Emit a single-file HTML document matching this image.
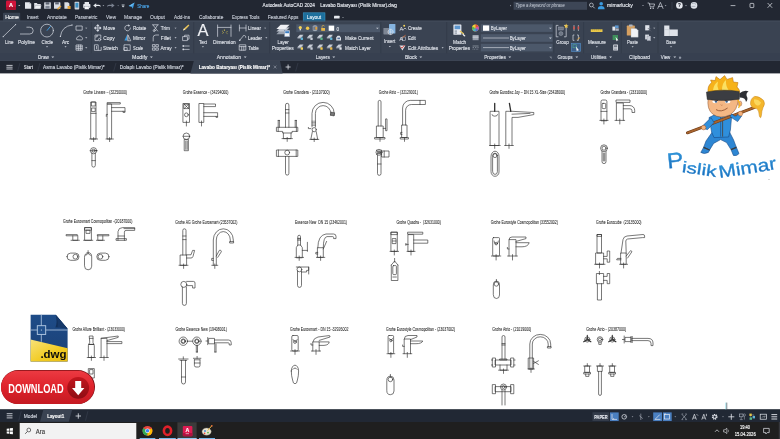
<!DOCTYPE html>
<html lang="tr">
<head>
<meta charset="utf-8">
<title>Autodesk AutoCAD 2024 - Lavabo Bataryası (Pislik Mimar).dwg</title>
<style>
html,body{margin:0;padding:0;background:#fff;overflow:hidden}
body{width:780px;height:439px;position:relative;font-family:"Liberation Sans",sans-serif}
svg{position:absolute;left:0;top:0;display:block;will-change:transform;transform:translateZ(0)}
text{font-family:"Liberation Sans",sans-serif;white-space:pre}
.ln{fill:none;stroke:#303030;stroke-width:.65;stroke-linecap:round;stroke-linejoin:round}
.lt{fill:#2e2e2e;font-size:3.9px}
.ic{fill:none;stroke:#d5dae3;stroke-width:.7;stroke-linecap:round;stroke-linejoin:round}
</style>
</head>
<body>
<svg width="780" height="439" viewBox="0 0 780 439">
<defs>
<linearGradient id="gBtn" x1="0" y1="0" x2="0" y2="1"><stop offset="0" stop-color="#ec3a42"/><stop offset=".5" stop-color="#de222b"/><stop offset="1" stop-color="#c41a22"/></linearGradient>
<linearGradient id="gCirc" x1="0" y1="0" x2="0" y2="1"><stop offset="0" stop-color="#c3161e"/><stop offset="1" stop-color="#8e0d13"/></linearGradient>
<linearGradient id="gBlue" x1="0" y1="0" x2="0" y2="1"><stop offset="0" stop-color="#1e4c88"/><stop offset="1" stop-color="#1b4076"/></linearGradient>
<linearGradient id="gYel" x1="0" y1="0" x2="1" y2="1"><stop offset="0" stop-color="#f7e27a"/><stop offset=".6" stop-color="#f2cb22"/><stop offset="1" stop-color="#e9bd14"/></linearGradient>
<linearGradient id="gTxt" x1="0" y1="0" x2="0" y2="1"><stop offset="0" stop-color="#35a0e0"/><stop offset="1" stop-color="#1560b0"/></linearGradient>
</defs>

<rect x="0" y="0" width="780" height="439" fill="#ffffff"/>
<rect x="0" y="0" width="780" height="21" fill="#222732"/>
<rect x="0" y="20.6" width="780" height="40.2" fill="#3a4352"/>
<rect x="0" y="60.6" width="780" height="12.8" fill="#222732"/>
<rect x="0" y="409.2" width="780" height="13" fill="#212834"/>
<rect x="0" y="422" width="780" height="17" fill="#1f1f1f"/>
<g id="titlebar">
<rect x="6" y="0.6" width="10" height="9.2" rx="1.2" fill="#d2143a"/>
<rect x="6" y="6.8" width="10" height="3" rx="1" fill="#a90f2d"/>
<text x="9.0" y="6.9" font-size="5.8" fill="#ffffff" font-weight="bold" font-style="normal" textLength="4.0" lengthAdjust="spacingAndGlyphs"  stroke="#ffffff" stroke-width=".14">A</text>
<path d="M18.1 5.0h2.2l-1.1 1.1z" fill="#e0e3e9"/>
<path d="M25 2.2h4.6l1.6 1.6v5H25z" fill="#e4e7ec"/><path d="M29.6 2.2v1.6h1.6" fill="none" stroke="#8a909c" stroke-width=".4"/>
<path d="M34.2 3h2.6l.8.9h3.2v4.9h-6.6z" fill="#e4e7ec"/><path d="M35.4 5.4h6l-1.2 3.4h-6z" fill="#f0f2f5" stroke="#6d7380" stroke-width=".3"/>
<rect x="44.2" y="2.2" width="6.6" height="6.6" rx=".6" fill="#d9dde4"/><rect x="45.6" y="2.2" width="3.8" height="2.4" fill="#5b6270"/><rect x="45.4" y="5.8" width="4.2" height="3" fill="#7b8290"/>
<rect x="54" y="2.2" width="6.4" height="6.6" rx=".6" fill="#d9dde4"/><rect x="55.2" y="2.2" width="3.6" height="2.2" fill="#5b6270"/><path d="M57 8.8l3.6-3.4.9.9-3.4 3.4z" fill="#e2a33a"/>
<path d="M64.4 2.2h3.6l1.4 1.4v5.2h-5z" fill="#d9dde4"/><rect x="67.6" y="6" width="3" height="3" fill="#e2a33a"/>
<rect x="74.6" y="1.8" width="4.6" height="7.6" rx=".7" fill="#cfd4dc"/><rect x="75.4" y="2.8" width="3" height="4.8" fill="#3a8fc4"/>
<rect x="83.2" y="4" width="7.2" height="4" rx=".8" fill="#e4e7ec"/><rect x="84.6" y="2" width="4.4" height="2.2" fill="#e4e7ec"/><rect x="84.6" y="6.4" width="4.4" height="2.8" fill="#f5f6f8" stroke="#6d7380" stroke-width=".3"/>
<path d="M93.2 5.6l3-2.4v1.6h2.4a1.9 1.9 0 0 1 1.8 2.4c-.3-1-1-1.2-1.8-1.2h-2.4v1.8z" fill="#e4e7ec"/>
<path d="M102.5 5.3h1.8l-0.9 0.9z" fill="#b8bec9"/>
<path d="M114.6 5.6l-3-2.4v1.6h-2.4a1.9 1.9 0 0 0-1.8 2.4c.3-1 1-1.2 1.8-1.2h2.4v1.8z" fill="#7b8290"/>
<path d="M117.3 5.3h1.8l-0.9 0.9z" fill="#7b8290"/>
<path d="M121.6 4.6h3M121.9 5.8h2.4l-1.2 1.4z" stroke="#cfd4dc" stroke-width=".5" fill="#cfd4dc"/>
<path d="M128.6 6l6-3.4-1.8 6.2-1.4-2.2z" fill="#3b9be0"/><path d="M128.6 6l2.8.6 3.2-4z" fill="#6cbaf0"/>
<text x="137.2" y="7.5" font-size="5.4" fill="#4aa3e6" font-weight="normal" font-style="normal" textLength="12.2" lengthAdjust="spacingAndGlyphs"  stroke="#4aa3e6" stroke-width=".14">Share</text>
<text x="262.6" y="7.4" font-size="5.2" fill="#e6e9ef" font-weight="normal" font-style="normal" textLength="52.4" lengthAdjust="spacingAndGlyphs"  stroke="#e6e9ef" stroke-width=".14">Autodesk AutoCAD 2024</text>
<text x="320.2" y="7.4" font-size="5.2" fill="#e6e9ef" font-weight="normal" font-style="normal" textLength="76.8" lengthAdjust="spacingAndGlyphs"  stroke="#e6e9ef" stroke-width=".14">Lavabo Bataryası (Pislik Mimar).dwg</text>
<path transform="rotate(-90 510.8 5.6)" d="M509.9 5.1h1.8l-0.9 0.9z" fill="#b8bec9"/>
<rect x="513.6" y="1.8" width="73.4" height="8" fill="#3d4656"/>
<text x="515.6" y="7.4" font-size="4.6" fill="#aab1bd" font-weight="normal" font-style="italic" textLength="49.0" lengthAdjust="spacingAndGlyphs"  stroke="#aab1bd" stroke-width=".14">Type a keyword or phrase</text>
<circle cx="591.4" cy="5" r="1.9" fill="none" stroke="#cfd4dc" stroke-width=".7"/><path d="M592.8 6.4l1.9 1.9" stroke="#cfd4dc" stroke-width=".8"/>
<circle cx="601.2" cy="3.8" r="1.8" fill="#3b9be0"/><path d="M597.8 9.2a3.4 3.2 0 0 1 6.8 0z" fill="#3b9be0"/>
<text x="607.0" y="7.4" font-size="5.0" fill="#e6e9ef" font-weight="normal" font-style="normal" textLength="25.8" lengthAdjust="spacingAndGlyphs"  stroke="#e6e9ef" stroke-width=".14">mimarlucky</text>
<path d="M642.1 5.1h1.8l-0.9 0.9z" fill="#b8bec9"/>
<path d="M648 3h1.2l1 3.8h3.6l.8-2.8h-5" class="ic" stroke-width=".8"/><circle cx="650.6" cy="8.2" r=".7" fill="#d5dae3"/><circle cx="653.2" cy="8.2" r=".7" fill="#d5dae3"/>
<path d="M657.8 8.4l2.6-6 2.6 6M658.8 6.4h3.2" class="ic" stroke-width="1"/>
<path d="M664.7 5.3h1.8l-0.9 0.9z" fill="#b8bec9"/>
<path d="M672 2v7.4" stroke="#4b5361" stroke-width=".5"/>
<circle cx="679.4" cy="5.4" r="3.3" fill="#e6e9ef"/>
<text x="678.0" y="7.4" font-size="5.2" fill="#222732" font-weight="bold" font-style="normal" textLength="2.8" lengthAdjust="spacingAndGlyphs"  stroke="#222732" stroke-width=".14">?</text>
<path d="M685.1 5.3h1.8l-0.9 0.9z" fill="#b8bec9"/>
<circle cx="694" cy="5.4" r="3.3" fill="#dfe3ea"/><path d="M692 3.6a3 3 0 0 1 4 .8M691.4 6.4h4" stroke="#7b8290" stroke-width=".5" fill="none"/>
<path d="M730.6 5.6h4.8" stroke="#e6e9ef" stroke-width=".7"/>
<rect x="750" y="3.4" width="3.8" height="4.2" rx=".6" fill="none" stroke="#e6e9ef" stroke-width=".7"/>
<path d="M767.6 3l4.6 4.8M772.2 3l-4.6 4.8" stroke="#e6e9ef" stroke-width=".7"/>
</g>
<g id="ribbontabs">
<path d="M3 21v-7.4q0-.8.8-.8h15.6q.8 0 .8.8V21z" fill="#3a4352"/>
<text x="5.2" y="19.4" font-size="6.0" fill="#ffffff" font-weight="normal" font-style="normal" textLength="13.8" lengthAdjust="spacingAndGlyphs"  stroke="#ffffff" stroke-width=".14">Home</text>
<text x="27.0" y="19.4" font-size="6.0" fill="#c9ced8" font-weight="normal" font-style="normal" textLength="11.5" lengthAdjust="spacingAndGlyphs"  stroke="#c9ced8" stroke-width=".14">Insert</text>
<text x="47.0" y="19.4" font-size="6.0" fill="#c9ced8" font-weight="normal" font-style="normal" textLength="19.7" lengthAdjust="spacingAndGlyphs"  stroke="#c9ced8" stroke-width=".14">Annotate</text>
<text x="75.0" y="19.4" font-size="6.0" fill="#c9ced8" font-weight="normal" font-style="normal" textLength="22.4" lengthAdjust="spacingAndGlyphs"  stroke="#c9ced8" stroke-width=".14">Parametric</text>
<text x="106.0" y="19.4" font-size="6.0" fill="#c9ced8" font-weight="normal" font-style="normal" textLength="10.0" lengthAdjust="spacingAndGlyphs"  stroke="#c9ced8" stroke-width=".14">View</text>
<text x="124.0" y="19.4" font-size="6.0" fill="#c9ced8" font-weight="normal" font-style="normal" textLength="18.0" lengthAdjust="spacingAndGlyphs"  stroke="#c9ced8" stroke-width=".14">Manage</text>
<text x="150.0" y="19.4" font-size="6.0" fill="#c9ced8" font-weight="normal" font-style="normal" textLength="15.0" lengthAdjust="spacingAndGlyphs"  stroke="#c9ced8" stroke-width=".14">Output</text>
<text x="174.0" y="19.4" font-size="6.0" fill="#c9ced8" font-weight="normal" font-style="normal" textLength="16.0" lengthAdjust="spacingAndGlyphs"  stroke="#c9ced8" stroke-width=".14">Add-ins</text>
<text x="199.0" y="19.4" font-size="6.0" fill="#c9ced8" font-weight="normal" font-style="normal" textLength="24.3" lengthAdjust="spacingAndGlyphs"  stroke="#c9ced8" stroke-width=".14">Collaborate</text>
<text x="232.0" y="19.4" font-size="6.0" fill="#c9ced8" font-weight="normal" font-style="normal" textLength="27.5" lengthAdjust="spacingAndGlyphs"  stroke="#c9ced8" stroke-width=".14">Express Tools</text>
<text x="267.7" y="19.4" font-size="6.0" fill="#c9ced8" font-weight="normal" font-style="normal" textLength="30.8" lengthAdjust="spacingAndGlyphs"  stroke="#c9ced8" stroke-width=".14">Featured Apps</text>
<rect x="303.2" y="12.8" width="21.8" height="8.4" fill="#1d6f9c" stroke="#3f9fd0" stroke-width=".5"/>
<text x="306.8" y="19.4" font-size="6.0" fill="#e9f3fa" font-weight="normal" font-style="normal" textLength="14.4" lengthAdjust="spacingAndGlyphs"  stroke="#e9f3fa" stroke-width=".14">Layout</text>
<rect x="334" y="15.8" width="5.6" height="2.8" rx=".4" fill="#e6e9ef"/>
<path d="M342.1 16.9h1.8l-0.9 0.9z" fill="#d5dae3"/>
</g>
<g id="ribbon">
<rect x="0" y="20.6" width="780" height="1" fill="#434d5b"/>
<path d="M91.3 22v38" stroke="#2f3744" stroke-width=".6"/>
<path d="M193.7 22v38" stroke="#2f3744" stroke-width=".6"/>
<path d="M269.7 22v38" stroke="#2f3744" stroke-width=".6"/>
<path d="M380.8 22v38" stroke="#2f3744" stroke-width=".6"/>
<path d="M446.7 22v38" stroke="#2f3744" stroke-width=".6"/>
<path d="M553.8 22v38" stroke="#2f3744" stroke-width=".6"/>
<path d="M583.6 22v38" stroke="#2f3744" stroke-width=".6"/>
<path d="M621.3 22v38" stroke="#2f3744" stroke-width=".6"/>
<path d="M658 22v38" stroke="#2f3744" stroke-width=".6"/>
<rect x="0" y="53.2" width="780" height="7.4" fill="#374050"/>
<path d="M3.2 36.6L15.6 24.6" class="ic" stroke-width=".8"/><circle cx="3.2" cy="36.6" r=".6" fill="#d5dae3"/><circle cx="15.6" cy="24.6" r=".6" fill="#d5dae3"/>
<text x="5.0" y="44.2" font-size="6.0" fill="#dfe3ea" font-weight="normal" font-style="normal" textLength="8.4" lengthAdjust="spacingAndGlyphs"  stroke="#dfe3ea" stroke-width=".14">Line</text>
<path d="M20.4 34h9.4a3.4 3.4 0 0 0 0-6.8h-3" class="ic" stroke-width=".8"/>
<text x="18.0" y="44.2" font-size="6.0" fill="#dfe3ea" font-weight="normal" font-style="normal" textLength="17.0" lengthAdjust="spacingAndGlyphs"  stroke="#dfe3ea" stroke-width=".14">Polyline</text>
<circle cx="47" cy="30.6" r="6.4" class="ic" stroke-width=".8"/><path d="M47 30.6l3.6-4.4" stroke="#3b9be0" stroke-width="1" fill="none"/>
<text x="41.4" y="44.2" font-size="6.0" fill="#dfe3ea" font-weight="normal" font-style="normal" textLength="11.6" lengthAdjust="spacingAndGlyphs"  stroke="#dfe3ea" stroke-width=".14">Circle</text>
<path d="M46.0 46.3h2.1l-1.1 1.1z" fill="#c9ced8"/>
<path d="M60.4 36.4q1.2-10.2 11.6-11.4" class="ic" stroke-width=".8"/><circle cx="60.4" cy="36.4" r=".6" fill="#d5dae3"/><circle cx="72" cy="25" r=".6" fill="#d5dae3"/>
<text x="62.0" y="44.2" font-size="6.0" fill="#dfe3ea" font-weight="normal" font-style="normal" textLength="7.2" lengthAdjust="spacingAndGlyphs"  stroke="#dfe3ea" stroke-width=".14">Arc</text>
<path d="M64.5 46.3h2.1l-1.1 1.1z" fill="#c9ced8"/>
<rect x="76.4" y="26" width="5.8" height="4.2" class="ic"/>
<path d="M85.2 27.7h2.1l-1.1 1.1z" fill="#c9ced8"/>
<path d="M76.6 39.4a1.6 1.6 0 0 1 1.2-2.4 2 2 0 0 1 3.6 0 1.6 1.6 0 0 1 .6 2.8z" class="ic"/>
<path d="M85.2 37.3h2.1l-1.1 1.1z" fill="#c9ced8"/>
<rect x="76.4" y="45" width="5.8" height="5.2" class="ic"/><path d="M76.4 46.8h5.8M76.4 48.6h5.8M78.4 45v5.2M80.4 45v5.2" class="ic" stroke-width=".4"/>
<path d="M85.2 47.3h2.1l-1.1 1.1z" fill="#c9ced8"/>
<text x="38.0" y="59.2" font-size="6.0" fill="#dfe3ea" font-weight="normal" font-style="normal" textLength="10.8" lengthAdjust="spacingAndGlyphs"  stroke="#dfe3ea" stroke-width=".14">Draw</text>
<path d="M51.4 56.5h2.8l-1.4 1.4z" fill="#c9ced8"/>
<path d="M97.8 24.8v6.4M94.6 28h6.4M97.8 24.6l-1.2 1.4h2.4zM97.8 31.4l-1.2-1.4h2.4zM94.4 28l1.4-1.2v2.4zM101.2 28l-1.4-1.2v2.4z" stroke="#d5dae3" stroke-width=".7" fill="#d5dae3"/>
<text x="103.3" y="30.2" font-size="6.0" fill="#dfe3ea" font-weight="normal" font-style="normal" textLength="12.0" lengthAdjust="spacingAndGlyphs"  stroke="#dfe3ea" stroke-width=".14">Move</text>
<circle cx="96" cy="36" r="1.2" class="ic"/><circle cx="99.6" cy="39.6" r="1.2" class="ic"/><path d="M97.4 35h3.4v3M95 37.6v3h3" class="ic" stroke-width=".5"/>
<text x="103.3" y="40.0" font-size="6.0" fill="#dfe3ea" font-weight="normal" font-style="normal" textLength="11.4" lengthAdjust="spacingAndGlyphs"  stroke="#dfe3ea" stroke-width=".14">Copy</text>
<rect x="94.8" y="44.8" width="3.4" height="5.6" class="ic"/><path d="M98.2 50.4h3v-3" class="ic"/><path d="M96.5 46.4v2.4" class="ic"/>
<text x="103.0" y="49.8" font-size="6.0" fill="#dfe3ea" font-weight="normal" font-style="normal" textLength="15.0" lengthAdjust="spacingAndGlyphs"  stroke="#dfe3ea" stroke-width=".14">Stretch</text>
<path d="M129 25.6a2.8 2.8 0 1 0 1.4 2.4" class="ic" stroke-width=".8"/><path d="M128.2 24.2l1.8 1.4-1.6 1.2z" fill="#d5dae3"/>
<text x="133.0" y="30.2" font-size="6.0" fill="#dfe3ea" font-weight="normal" font-style="normal" textLength="13.3" lengthAdjust="spacingAndGlyphs"  stroke="#dfe3ea" stroke-width=".14">Rotate</text>
<path d="M124.4 40.4l2.6-5.4v5.4z" fill="#3b9be0"/><path d="M130.6 40.4l-2.6-5.4v5.4z" class="ic" stroke-width=".5"/><path d="M127.5 34v7.2" stroke="#d5dae3" stroke-width=".4"/>
<text x="133.0" y="40.0" font-size="6.0" fill="#dfe3ea" font-weight="normal" font-style="normal" textLength="12.3" lengthAdjust="spacingAndGlyphs"  stroke="#dfe3ea" stroke-width=".14">Mirror</text>
<rect x="124.4" y="44.8" width="5.8" height="5.6" class="ic"/><rect x="124.4" y="47.6" width="2.8" height="2.8" class="ic"/>
<text x="133.0" y="49.8" font-size="6.0" fill="#dfe3ea" font-weight="normal" font-style="normal" textLength="10.0" lengthAdjust="spacingAndGlyphs"  stroke="#dfe3ea" stroke-width=".14">Scale</text>
<path d="M153 25l4.6 6M157.6 25l-3 4.6" class="ic" stroke-width=".9"/><circle cx="154.2" cy="30.6" r="1" class="ic"/><path d="M152.6 24.8h5.6" class="ic" stroke-width=".9"/>
<text x="160.8" y="30.2" font-size="6.0" fill="#dfe3ea" font-weight="normal" font-style="normal" textLength="9.2" lengthAdjust="spacingAndGlyphs"  stroke="#dfe3ea" stroke-width=".14">Trim</text>
<path d="M174.5 27.7h2.1l-1.1 1.1z" fill="#c9ced8"/>
<path d="M153.2 41v-3.4a2.6 2.6 0 0 1 2.6-2.6h2.8" class="ic" stroke-width=".8"/>
<text x="160.8" y="40.0" font-size="6.0" fill="#dfe3ea" font-weight="normal" font-style="normal" textLength="10.0" lengthAdjust="spacingAndGlyphs"  stroke="#dfe3ea" stroke-width=".14">Fillet</text>
<path d="M174.5 37.3h2.1l-1.1 1.1z" fill="#c9ced8"/>
<rect x="152.8" y="44.6" width="2.2" height="2.2" class="ic" stroke-width=".5"/><rect x="156.2" y="44.6" width="2.2" height="2.2" class="ic" stroke-width=".5"/><rect x="152.8" y="48" width="2.2" height="2.2" class="ic" stroke-width=".5"/><rect x="156.2" y="48" width="2.2" height="2.2" class="ic" stroke-width=".5"/>
<text x="160.4" y="49.8" font-size="6.0" fill="#dfe3ea" font-weight="normal" font-style="normal" textLength="11.2" lengthAdjust="spacingAndGlyphs"  stroke="#dfe3ea" stroke-width=".14">Array</text>
<path d="M174.5 47.3h2.1l-1.1 1.1z" fill="#c9ced8"/>
<path d="M183 30.6l1-2 4.4-4 1 1-4.2 4.2z" fill="#e8c35a"/><path d="M183 30.6l1-2 1 1z" fill="#f5f6f8"/>
<rect x="183" y="36.6" width="4.4" height="4" class="ic"/><path d="M184.6 36.6v-1.4h4.4v4h-1.6" class="ic" stroke-width=".5"/>
<path d="M183 46h6.2M183 49.4h6.2" class="ic" stroke-width=".8"/><rect x="182.6" y="45.2" width="1.4" height="1.6" fill="#d5dae3"/><rect x="182.6" y="48.6" width="1.4" height="1.6" fill="#d5dae3"/>
<text x="132.0" y="59.2" font-size="6.0" fill="#dfe3ea" font-weight="normal" font-style="normal" textLength="15.5" lengthAdjust="spacingAndGlyphs"  stroke="#dfe3ea" stroke-width=".14">Modify</text>
<path d="M150.0 56.5h2.8l-1.4 1.4z" fill="#c9ced8"/>
<text x="197.6" y="36.2" font-size="15.6" fill="#eef0f4" font-weight="normal" font-style="normal" textLength="11.0" lengthAdjust="spacingAndGlyphs"  stroke="#eef0f4" stroke-width=".14">A</text>
<text x="199.0" y="44.2" font-size="6.0" fill="#dfe3ea" font-weight="normal" font-style="normal" textLength="8.0" lengthAdjust="spacingAndGlyphs"  stroke="#dfe3ea" stroke-width=".14">Text</text>
<path d="M201.9 46.3h2.1l-1.1 1.1z" fill="#c9ced8"/>
<path d="M217.6 25v11.4M231 25v11.4M217.6 27.4h13.4" class="ic" stroke-width=".7"/>
<path d="M222.4 33.4l1.4-1M224.4 31v-1.6M226.2 32.4l1.2-1.2M222.2 31l.8.6M227.4 33.6l-.8-.4" stroke="#e7d24a" stroke-width=".7" fill="none"/>
<text x="213.0" y="44.2" font-size="6.0" fill="#dfe3ea" font-weight="normal" font-style="normal" textLength="22.8" lengthAdjust="spacingAndGlyphs"  stroke="#dfe3ea" stroke-width=".14">Dimension</text>
<path d="M239.4 25v6M246 25v6M239.4 28h6.6" class="ic" stroke-width=".8"/>
<text x="248.0" y="30.2" font-size="6.0" fill="#dfe3ea" font-weight="normal" font-style="normal" textLength="13.0" lengthAdjust="spacingAndGlyphs"  stroke="#dfe3ea" stroke-width=".14">Linear</text>
<path d="M264.1 27.7h2.1l-1.1 1.1z" fill="#c9ced8"/>
<path d="M239.6 40.4l3-3.6a1.6 1.6 0 0 1 3.2.6" class="ic" stroke-width=".7"/><circle cx="239.8" cy="40.2" r=".8" fill="#d5dae3"/>
<text x="248.0" y="40.0" font-size="6.0" fill="#dfe3ea" font-weight="normal" font-style="normal" textLength="14.0" lengthAdjust="spacingAndGlyphs"  stroke="#dfe3ea" stroke-width=".14">Leader</text>
<path d="M265.3 37.3h2.1l-1.1 1.1z" fill="#c9ced8"/>
<rect x="239.6" y="44.8" width="6.2" height="5.4" class="ic"/><path d="M239.6 46.6h6.2M241.7 46.6v3.6M243.8 46.6v3.6" class="ic" stroke-width=".5"/>
<text x="248.3" y="49.8" font-size="6.0" fill="#dfe3ea" font-weight="normal" font-style="normal" textLength="10.4" lengthAdjust="spacingAndGlyphs"  stroke="#dfe3ea" stroke-width=".14">Table</text>
<text x="216.7" y="59.2" font-size="6.0" fill="#dfe3ea" font-weight="normal" font-style="normal" textLength="24.3" lengthAdjust="spacingAndGlyphs"  stroke="#dfe3ea" stroke-width=".14">Annotation</text>
<path d="M243.8 56.5h2.8l-1.4 1.4z" fill="#c9ced8"/>
<path d="M276.4 34.200L280.600 30H289.600L285.400 34.200Z" fill="#9aa2af"/><path d="M276.400 31.600L280.600 27.400H289.600L285.400 31.600Z" fill="#c2c8d2"/><path d="M276.400 29L280.600 24.800H289.600L285.400 29Z" fill="#eef0f4"/>
<rect x="284.4" y="30.4" width="5.4" height="6.4" fill="#f4f5f8" stroke="#55719a" stroke-width=".4"/><rect x="285.2" y="31.2" width="3.8" height="2" fill="#3b7ec4"/>
<text x="277.5" y="44.2" font-size="6.0" fill="#dfe3ea" font-weight="normal" font-style="normal" textLength="11.2" lengthAdjust="spacingAndGlyphs"  stroke="#dfe3ea" stroke-width=".14">Layer</text>
<text x="271.7" y="50.2" font-size="6.0" fill="#dfe3ea" font-weight="normal" font-style="normal" textLength="22.0" lengthAdjust="spacingAndGlyphs"  stroke="#dfe3ea" stroke-width=".14">Properties</text>
<rect x="296.3" y="24.3" width="83.7" height="7.9" fill="#4c586a"/>
<circle cx="300.3" cy="27.6" r="1.6" fill="#f1d35c"/><rect x="299.6" y="29" width="1.4" height="1.4" fill="#d9dde4"/>
<circle cx="307.6" cy="28.2" r="1.7" fill="#f1c84a"/>
<path d="M313.2 26h3.6v4.4h-3.6zM315 25.2v6" stroke="#c9ced8" stroke-width=".6" fill="none"/><rect x="315.4" y="27" width="1.8" height="2.6" fill="#e2a33a"/>
<rect x="321.2" y="28" width="3.8" height="2.8" fill="#e9b94a"/><path d="M322 28v-1.2a1.2 1.2 0 0 1 2.4-.4" stroke="#e9b94a" stroke-width=".6" fill="none"/>
<rect x="328.7" y="25.6" width="5.5" height="5.2" fill="#ffffff"/>
<text x="336.4" y="30.5" font-size="6.0" fill="#dfe3ea" font-weight="normal" font-style="normal" textLength="2.6" lengthAdjust="spacingAndGlyphs"  stroke="#dfe3ea" stroke-width=".14">0</text>
<path d="M376.0 27.7h2.8l-1.4 1.4z" fill="#c9ced8"/>
<path d="M297.1 38.8L299.90000000000003 35.8H303.5L300.7 38.8Z" fill="#7f8896"/><path d="M297.1 37.8L299.90000000000003 34.8H303.5L300.7 37.8Z" fill="#c9ced8"/><rect x="300.7" y="37.4" width="2.300" height="2.600" rx=".5" fill="#5fb4d8"/>
<path d="M297.1 48.6L299.90000000000003 45.6H303.5L300.7 48.6Z" fill="#7f8896"/><path d="M297.1 47.6L299.90000000000003 44.6H303.5L300.7 47.6Z" fill="#c9ced8"/><rect x="300.7" y="47.2" width="2.300" height="2.600" rx=".5" fill="#f1d35c"/>
<path d="M306.8 38.8L309.6 35.8H313.2L310.4 38.8Z" fill="#7f8896"/><path d="M306.8 37.8L309.6 34.8H313.2L310.4 37.8Z" fill="#c9ced8"/><rect x="310.4" y="37.4" width="2.300" height="2.600" rx=".5" fill="#c9ced8"/>
<path d="M306.8 48.6L309.6 45.6H313.2L310.4 48.6Z" fill="#7f8896"/><path d="M306.8 47.6L309.6 44.6H313.2L310.4 47.6Z" fill="#c9ced8"/><rect x="310.4" y="47.2" width="2.300" height="2.600" rx=".5" fill="#c9ced8"/>
<path d="M316.8 38.8L319.6 35.8H323.2L320.4 38.8Z" fill="#7f8896"/><path d="M316.8 37.8L319.6 34.8H323.2L320.4 37.8Z" fill="#c9ced8"/><rect x="320.4" y="37.4" width="2.300" height="2.600" rx=".5" fill="#58b889"/>
<path d="M316.8 48.6L319.6 45.6H323.2L320.4 48.6Z" fill="#7f8896"/><path d="M316.8 47.6L319.6 44.6H323.2L320.4 47.6Z" fill="#c9ced8"/><rect x="320.4" y="47.2" width="2.300" height="2.600" rx=".5" fill="#f1c84a"/>
<path d="M326.5 38.8L329.3 35.8H332.9L330.09999999999997 38.8Z" fill="#7f8896"/><path d="M326.5 37.8L329.3 34.8H332.9L330.09999999999997 37.8Z" fill="#c9ced8"/><rect x="330.09999999999997" y="37.4" width="2.300" height="2.600" rx=".5" fill="#5fb4d8"/>
<path d="M326.5 48.6L329.3 45.6H332.9L330.09999999999997 48.6Z" fill="#7f8896"/><path d="M326.5 47.6L329.3 44.6H332.9L330.09999999999997 47.6Z" fill="#c9ced8"/><rect x="330.09999999999997" y="47.2" width="2.300" height="2.600" rx=".5" fill="#e9b94a"/>
<path d="M336.2 40.4v-3l1.4-1.6h2l1.4 1.6v3z" fill="#dfe3ea"/><rect x="337.4" y="37.6" width="2.6" height="1.6" fill="#55719a"/>
<path d="M335.8 48.6L338.6 45.6H342.2L339.4 48.6Z" fill="#7f8896"/><path d="M335.8 47.6L338.6 44.6H342.2L339.4 47.6Z" fill="#c9ced8"/><rect x="339.4" y="47.2" width="2.300" height="2.600" rx=".5" fill="#dfe3ea"/>
<text x="345.0" y="40.0" font-size="6.0" fill="#dfe3ea" font-weight="normal" font-style="normal" textLength="28.7" lengthAdjust="spacingAndGlyphs"  stroke="#dfe3ea" stroke-width=".14">Make Current</text>
<text x="345.0" y="49.8" font-size="6.0" fill="#dfe3ea" font-weight="normal" font-style="normal" textLength="25.8" lengthAdjust="spacingAndGlyphs"  stroke="#dfe3ea" stroke-width=".14">Match Layer</text>
<text x="315.8" y="59.2" font-size="6.0" fill="#dfe3ea" font-weight="normal" font-style="normal" textLength="13.9" lengthAdjust="spacingAndGlyphs"  stroke="#dfe3ea" stroke-width=".14">Layers</text>
<path d="M332.4 56.5h2.8l-1.4 1.4z" fill="#c9ced8"/>
<rect x="383.4" y="28" width="8.4" height="6.4" rx=".6" fill="#7d8694"/><rect x="389" y="24" width="6.4" height="9.6" rx=".6" fill="#8dc0ee" opacity=".9"/><circle cx="390.6" cy="32" r="2.6" fill="none" stroke="#e3e6ec" stroke-width=".6"/><path d="M390.6 29v6M387.6 32h6" stroke="#e3e6ec" stroke-width=".5"/>
<text x="384.0" y="43.4" font-size="6.0" fill="#dfe3ea" font-weight="normal" font-style="normal" textLength="11.3" lengthAdjust="spacingAndGlyphs"  stroke="#dfe3ea" stroke-width=".14">Insert</text>
<path d="M388.8 46.1h2.1l-1.1 1.1z" fill="#c9ced8"/>
<path d="M400 30.4l1.4-3.4 1.4 3.4M400.6 29.4h1.6" class="ic" stroke-width=".6"/><path d="M403.4 29.6l1.6-1.6 1 1" class="ic" stroke-width=".6"/><circle cx="404.2" cy="25.8" r="1" fill="#f1d35c"/>
<text x="408.0" y="30.2" font-size="6.0" fill="#dfe3ea" font-weight="normal" font-style="normal" textLength="13.7" lengthAdjust="spacingAndGlyphs"  stroke="#dfe3ea" stroke-width=".14">Create</text>
<path d="M399.8 40.4l1.4-3.4 1.4 3.4M400.4 39.4h1.6" class="ic" stroke-width=".6"/><rect x="402.4" y="37" width="3" height="3.4" fill="none" stroke="#d5dae3" stroke-width=".5"/><path d="M402.6 37.4l3-2.2" stroke="#e2733a" stroke-width=".8"/>
<text x="408.0" y="40.0" font-size="6.0" fill="#dfe3ea" font-weight="normal" font-style="normal" textLength="7.8" lengthAdjust="spacingAndGlyphs"  stroke="#dfe3ea" stroke-width=".14">Edit</text>
<path d="M399.4 45.6h6l-3 5z" fill="#e3e6ec"/><path d="M400.6 46.6l1.4 1.6 2.6-3.2" stroke="#d0342c" stroke-width=".8" fill="none"/>
<text x="408.0" y="49.8" font-size="6.0" fill="#dfe3ea" font-weight="normal" font-style="normal" textLength="30.3" lengthAdjust="spacingAndGlyphs"  stroke="#dfe3ea" stroke-width=".14">Edit Attributes</text>
<path d="M441.6 47.3h2.1l-1.1 1.1z" fill="#c9ced8"/>
<text x="405.0" y="59.2" font-size="6.0" fill="#dfe3ea" font-weight="normal" font-style="normal" textLength="12.0" lengthAdjust="spacingAndGlyphs"  stroke="#dfe3ea" stroke-width=".14">Block</text>
<path d="M419.4 56.5h2.8l-1.4 1.4z" fill="#c9ced8"/>
<rect x="453.4" y="24.4" width="8" height="10.4" rx=".6" fill="#e6e9ef"/><rect x="454.6" y="25.6" width="5.6" height="3.6" fill="#5d97cf"/><rect x="454.6" y="30.4" width="2.4" height="1.4" fill="#9aa2af"/><rect x="454.6" y="32.4" width="2.4" height="1.4" fill="#9aa2af"/>
<path d="M459.6 31.6l3.8 3 .8-1-3.8-3z" fill="#e9c85a"/><path d="M463 33.4l2.6 2.6-1.4.6-1.8-2z" fill="#f4f5f8"/>
<text x="453.0" y="44.2" font-size="6.0" fill="#dfe3ea" font-weight="normal" font-style="normal" textLength="13.3" lengthAdjust="spacingAndGlyphs"  stroke="#dfe3ea" stroke-width=".14">Match</text>
<text x="448.7" y="50.2" font-size="6.0" fill="#dfe3ea" font-weight="normal" font-style="normal" textLength="21.3" lengthAdjust="spacingAndGlyphs"  stroke="#dfe3ea" stroke-width=".14">Properties</text>
<circle cx="475.4" cy="28" r="3.4" fill="#e8a23a"/><path d="M475.4 28v-3.4a3.4 3.4 0 0 1 3 1.8z" fill="#e5483c"/><path d="M475.4 28l3-1.6a3.4 3.4 0 0 1 0 3.4z" fill="#c44bc0"/><path d="M475.4 28l3 1.8a3.4 3.4 0 0 1-3 1.6z" fill="#4a6fd8"/><path d="M475.4 28v3.4a3.4 3.4 0 0 1-3-1.6z" fill="#3fb6c8"/><path d="M475.4 28l-3 1.8a3.4 3.4 0 0 1 0-3.4z" fill="#58b84a"/><path d="M475.4 28l-3-1.6a3.4 3.4 0 0 1 3-1.8z" fill="#e9d23c"/>
<rect x="472.6" y="35.2" width="6" height="5" fill="#9aa2af"/><path d="M472.6 36h6M472.6 37.4h6" stroke="#e3e6ec" stroke-width=".5"/>
<path d="M472.6 46h6M472.6 47.6h1.4M475 47.6h1.4M477.4 47.6h1.2M472.6 49.2h.8M474.2 49.2h.8M475.8 49.2h.8M477.4 49.2h.8" stroke="#aeb5c1" stroke-width=".6"/>
<rect x="480.8" y="24.3" width="71.8" height="7.6" fill="#4c586a"/>
<path d="M549.0 27.7h2.8l-1.4 1.4z" fill="#c9ced8"/>
<rect x="480.8" y="34.2" width="71.8" height="7.6" fill="#4c586a"/>
<path d="M549.0 37.6h2.8l-1.4 1.4z" fill="#c9ced8"/>
<rect x="480.8" y="43.8" width="71.8" height="7.6" fill="#4c586a"/>
<path d="M549.0 47.2h2.8l-1.4 1.4z" fill="#c9ced8"/>
<rect x="483" y="25.4" width="6.2" height="5.4" fill="#ffffff"/>
<text x="490.8" y="30.4" font-size="6.0" fill="#dfe3ea" font-weight="normal" font-style="normal" textLength="16.2" lengthAdjust="spacingAndGlyphs"  stroke="#dfe3ea" stroke-width=".14">ByLayer</text>
<path d="M483 38h26" stroke="#dfe3ea" stroke-width=".6"/>
<text x="509.7" y="40.2" font-size="6.0" fill="#dfe3ea" font-weight="normal" font-style="normal" textLength="16.1" lengthAdjust="spacingAndGlyphs"  stroke="#dfe3ea" stroke-width=".14">ByLayer</text>
<path d="M483 47.6h26" stroke="#dfe3ea" stroke-width=".6"/>
<text x="509.7" y="49.8" font-size="6.0" fill="#dfe3ea" font-weight="normal" font-style="normal" textLength="16.1" lengthAdjust="spacingAndGlyphs"  stroke="#dfe3ea" stroke-width=".14">ByLayer</text>
<text x="484.2" y="59.2" font-size="6.0" fill="#dfe3ea" font-weight="normal" font-style="normal" textLength="21.6" lengthAdjust="spacingAndGlyphs"  stroke="#dfe3ea" stroke-width=".14">Properties</text>
<path d="M508.4 56.5h2.8l-1.4 1.4z" fill="#c9ced8"/>
<path d="M549.8 56.8h1.6v1.6M551.4 58.4l-1.6-1.6" stroke="#aeb5c1" stroke-width=".4" fill="none"/>
<path d="M558 25.4h-1.8v11.4h1.8M564.4 25.4h1.8v11.4h-1.8" class="ic" stroke-width=".7"/><rect x="558.6" y="27" width="4.6" height="3" fill="#6c7584" stroke="#aeb5c1" stroke-width=".4"/><circle cx="560.9" cy="33.6" r="2" fill="#6c7584" stroke="#aeb5c1" stroke-width=".4"/>
<path d="M566.2 23.6l.7 1.6 1.7.2-1.3 1.1.4 1.7-1.5-.9-1.5.9.4-1.700-1.300-1.100 1.700-.2z" fill="#f1c84a"/>
<text x="556.3" y="44.2" font-size="6.0" fill="#dfe3ea" font-weight="normal" font-style="normal" textLength="12.4" lengthAdjust="spacingAndGlyphs"  stroke="#dfe3ea" stroke-width=".14">Group</text>
<path d="M574 25v6M578.4 25v6" stroke="#d5dae3" stroke-width=".6"/><rect x="573.2" y="26.400" width="1.600" height="3" fill="#d0544c"/><rect x="577.600" y="26.400" width="1.600" height="3" fill="#d0544c"/>
<path d="M574 35h-1v5.400h1M577.400 35h1v5.400h-1" class="ic" stroke-width=".6"/><path d="M576 40.400l3.400-3.200.8.800z" fill="#e2a33a"/>
<rect x="571.4" y="43.2" width="9.2" height="8.4" fill="#3d5f8a" stroke="#5b9bd8" stroke-width=".5"/><rect x="573" y="44.800" width="3.600" height="3" fill="none" stroke="#58b889" stroke-width=".5"/><path d="M575.800 46.200l3.200 4-1.400.2-.800 1.200z" fill="#f4f5f8"/>
<text x="557.5" y="59.2" font-size="6.0" fill="#dfe3ea" font-weight="normal" font-style="normal" textLength="15.0" lengthAdjust="spacingAndGlyphs"  stroke="#dfe3ea" stroke-width=".14">Groups</text>
<path d="M575.4 56.5h2.8l-1.4 1.4z" fill="#c9ced8"/>
<rect x="590.8" y="29.3" width="11.7" height="2.7" fill="#e9c84a"/><path d="M592.6 29.3v1.200M594.600 29.3v1.200M596.600 29.3v1.200M598.600 29.3v1.200M600.600 29.3v1.200" stroke="#8a6d1c" stroke-width=".35"/>
<text x="588.0" y="44.2" font-size="6.0" fill="#dfe3ea" font-weight="normal" font-style="normal" textLength="17.8" lengthAdjust="spacingAndGlyphs"  stroke="#dfe3ea" stroke-width=".14">Measure</text>
<path d="M595.8 46.3h2.1l-1.1 1.1z" fill="#c9ced8"/>
<rect x="612.4" y="26.6" width="3" height="4" fill="#e3e6ec"/><rect x="615" y="25.400" width="3.600" height="2.600" fill="#5d97cf"/><rect x="615.600" y="28.400" width="3.200" height="2.400" fill="#aeb5c1"/>
<rect x="612.6" y="35" width="5.400" height="5" fill="#3f8f5c"/><path d="M615.600 36.800l2.800 3.600-1.300.1-.6 1z" fill="#f4f5f8"/>
<rect x="613.2" y="44.6" width="4.800" height="6" rx=".4" fill="#d9dde4"/><rect x="614" y="45.400" width="3.200" height="1.400" fill="#5b6270"/><path d="M614 48h3.200M614 49.400h3.200" stroke="#5b6270" stroke-width=".5"/>
<text x="590.8" y="59.2" font-size="6.0" fill="#dfe3ea" font-weight="normal" font-style="normal" textLength="15.5" lengthAdjust="spacingAndGlyphs"  stroke="#dfe3ea" stroke-width=".14">Utilities</text>
<path d="M609.2 56.5h2.8l-1.4 1.4z" fill="#c9ced8"/>
<rect x="626.8" y="25.6" width="8" height="10" rx=".6" fill="#d6a060"/><rect x="629" y="24.600" width="3.600" height="2" rx=".5" fill="#aeb5c1"/><path d="M631 28.400h5.200l2 2v6.800h-7.200z" fill="#f0f2f5" stroke="#9aa2af" stroke-width=".3"/>
<text x="627.0" y="44.2" font-size="6.0" fill="#dfe3ea" font-weight="normal" font-style="normal" textLength="11.0" lengthAdjust="spacingAndGlyphs"  stroke="#dfe3ea" stroke-width=".14">Paste</text>
<path d="M631.6 46.3h2.1l-1.1 1.1z" fill="#c9ced8"/>
<rect x="645.2" y="25.2" width="4.200" height="5.200" fill="#dfe3ea"/><path d="M647.800 28l3.400 3.400M651 28.200l-3 3" stroke="#5b6270" stroke-width=".7"/>
<path d="M653.2 27.7h2.1l-1.1 1.1z" fill="#c9ced8"/>
<rect x="645.2" y="34.6" width="3.800" height="4.800" fill="#dfe3ea"/><rect x="647" y="36" width="3.800" height="4.800" fill="#c9ced8" stroke="#5b6270" stroke-width=".3"/>
<path d="M653.2 37.3h2.1l-1.1 1.1z" fill="#c9ced8"/>
<text x="629.0" y="59.2" font-size="6.0" fill="#dfe3ea" font-weight="normal" font-style="normal" textLength="21.0" lengthAdjust="spacingAndGlyphs"  stroke="#dfe3ea" stroke-width=".14">Clipboard</text>
<path d="M664.2 25.600h5.200v4h8.400v6.400h-13.600z" fill="#dfe3ea"/><path d="M669.400 29.600v6.400M664.200 29.600h5.200" stroke="#b3bac6" stroke-width=".4"/>
<text x="666.3" y="44.2" font-size="6.0" fill="#dfe3ea" font-weight="normal" font-style="normal" textLength="9.5" lengthAdjust="spacingAndGlyphs"  stroke="#dfe3ea" stroke-width=".14">Base</text>
<path d="M670.0 46.3h2.1l-1.1 1.1z" fill="#c9ced8"/>
<text x="660.8" y="59.2" font-size="6.0" fill="#dfe3ea" font-weight="normal" font-style="normal" textLength="9.5" lengthAdjust="spacingAndGlyphs"  stroke="#dfe3ea" stroke-width=".14">View</text>
<path d="M673.4 56.5h2.8l-1.4 1.4z" fill="#c9ced8"/>
<text x="678.8" y="58.7" font-size="4.6" fill="#aeb5c1" font-weight="normal" font-style="normal" textLength="2.6" lengthAdjust="spacingAndGlyphs"  stroke="#aeb5c1" stroke-width=".14">»</text>
</g>
<g id="doctabs">
<path d="M6.400 65.400h6.200M6.400 67.200h6.200M6.400 69h6.200" stroke="#e6e9ef" stroke-width=".8"/>
<path d="M17.6 71.400l2.400-8.400" stroke="#3f4756" stroke-width=".5"/>
<path d="M37.599999999999994 71.400l2.400-8.400" stroke="#3f4756" stroke-width=".5"/>
<path d="M113.6 71.400l2.400-8.400" stroke="#3f4756" stroke-width=".5"/>
<path d="M295.6 71.400l2.400-8.400" stroke="#3f4756" stroke-width=".5"/>
<text x="23.8" y="69.1" font-size="5.8" fill="#e6e9ef" font-weight="normal" font-style="normal" textLength="9.2" lengthAdjust="spacingAndGlyphs"  stroke="#e6e9ef" stroke-width=".14">Start</text>
<text x="43.0" y="69.1" font-size="5.8" fill="#d5dae3" font-weight="normal" font-style="normal" textLength="61.7" lengthAdjust="spacingAndGlyphs"  stroke="#d5dae3" stroke-width=".14">Asma Lavabo (Pislik Mimar)*</text>
<text x="119.7" y="69.1" font-size="5.8" fill="#d5dae3" font-weight="normal" font-style="normal" textLength="64.0" lengthAdjust="spacingAndGlyphs"  stroke="#d5dae3" stroke-width=".14">Dolaplı Lavabo (Pislik Mimar)*</text>
<path d="M190.400 73.400l3.400-12.400h86.200l2.600 12.400z" fill="#3a4352"/>
<text x="198.7" y="69.1" font-size="5.8" fill="#ffffff" font-weight="bold" font-style="normal" textLength="71.3" lengthAdjust="spacingAndGlyphs"  stroke="#ffffff" stroke-width=".14">Lavabo Bataryası (Pislik Mimar)*</text>
<path d="M273.800 65.600l2.600 2.800M276.400 65.600l-2.600 2.800" stroke="#aeb5c1" stroke-width=".5"/>
<path d="M285.600 67h5M288.100 64.500v5" stroke="#e6e9ef" stroke-width=".8"/>
</g>
<g id="drawing">
<text x="83.3" y="94.3" font-size="4.7" fill="#222222" font-weight="normal" font-style="normal" textLength="43.7" lengthAdjust="spacingAndGlyphs" stroke="#222" stroke-width=".05">Grohe Lineare – (32250000)</text>
<rect class="ln" x="91.1" y="102.0" width="4.9" height="37.0" rx="0" />
<rect class="ln" x="91.8" y="102.0" width="3.5" height="4.0" rx="0" fill="#6a6a6a"/>
<rect class="ln" x="92.0" y="108.0" width="3.2" height="3.6" rx="0" />
<path class="ln" d="M91.1 113.4H96" />
<path class="ln" d="M89.6 139H97.6" />
<path class="ln" d="M93.6 137.6V141.6" />
<rect class="ln" x="107.5" y="104.0" width="4.1" height="35.0" rx="0" />
<path class="ln" d="M107.5 102.6H120.3V104H107.5Z" />
<path class="ln" d="M111.6 107.6H125V111.3H111.6" />
<path class="ln" d="M123 111.3V112.4H125V111.3" />
<path class="ln" d="M107.5 114.4h-1.2v2" />
<path class="ln" d="M106 139H113.4" />
<path class="ln" d="M109.6 137.6V141.6" />
<circle class="ln" cx="93.6" cy="150.7" r="3.1" />
<circle class="ln" cx="93.6" cy="150.7" r="1.5" />
<path class="ln" d="M90 150.7H97.2" />
<path class="ln" d="M91.9 153.2V165.4a1.7 1.7 0 0 0 3.4 0V153.2" />
<path class="ln" d="M91.9 160.6h3.4" />
<text x="182.7" y="94.3" font-size="4.7" fill="#222222" font-weight="normal" font-style="normal" textLength="45.8" lengthAdjust="spacingAndGlyphs" stroke="#222" stroke-width=".05">Grohe Essence - (34294000)</text>
<rect class="ln" x="183.3" y="103.5" width="6.2" height="18.9" rx="0" />
<rect class="ln" x="184.2" y="104.2" width="4.4" height="4.4" rx="0" />
<path class="ln" d="M184.2 104.2L188.6 108.6M188.6 104.2L184.2 108.6" />
<circle class="ln" cx="186.4" cy="114.8" r="1.9" />
<path class="ln" d="M186.4 121.0V126.0" />
<rect class="ln" x="199.3" y="103.5" width="4.5" height="18.9" rx="0" />
<path class="ln" d="M203.8 104H215.5V106.6H203.8" />
<path class="ln" d="M203.8 112.7H217.6V116.4H203.8" />
<path class="ln" d="M216 116.4v1h1.6v-1" />
<path class="ln" d="M201.5 121.0V126.0" />
<circle class="ln" cx="186.4" cy="136.3" r="3.3" />
<path class="ln" d="M183.1 136.3H189.7" />
<rect class="ln" x="184.6" y="139.4" width="3.8" height="11.3" rx="0" />
<path class="ln" d="M185.8 141v8.4M187.2 141v8.4" />
<text x="283.2" y="94.4" font-size="4.7" fill="#222222" font-weight="normal" font-style="normal" textLength="46.5" lengthAdjust="spacingAndGlyphs" stroke="#222" stroke-width=".05">Grohe Grandera - (21107000)</text>
<path class="ln" d="M285.5 127.3V105a1.7 1.7 0 0 1 3.4 0V127.3" />
<path class="ln" d="M285.5 109.6h3.4M285.5 113h3.4" />
<path class="ln" d="M276.8 127.3H297.8V131.4H292V133H282.6V131.4H276.8Z" />
<path class="ln" d="M278.2 120.4V131.4M279.4 120.4V127.3M278.2 120.4h1.2" />
<path class="ln" d="M296.4 120.4V131.4M295.2 120.4V127.3M295.2 120.4h1.2" />
<path class="ln" d="M283.4 133V138.6H291V133" />
<path class="ln" d="M282 138.6H292.4" />
<path class="ln" d="M287.2 137.4V141.4" />
<path class="ln" d="M312 127V113.4a11.1 11 0 0 1 22.2 0V115.4" />
<path class="ln" d="M315.4 127V113.4a7.7 7.8 0 0 1 15.4 0V115.4" />
<rect x="330.6" y="112.4" width="3.8" height="3.2" fill="#777" stroke="#333" stroke-width=".5" transform="rotate(12 332.5 114)"/>
<path class="ln" d="M312 121.200h3.400M312 122.600h3.400M312 124h3.400M312 125.400h3.400" style="stroke-width:.45"/>
<circle class="ln" cx="314.2" cy="129.7" r="2.1" />
<path class="ln" d="M311 128.600h-2.600v-1.200" />
<path class="ln" d="M312.400 131.600L310.800 139.400H317.700L316.200 131.600" />
<path class="ln" d="M309.800 139.400H318.800" />
<path class="ln" d="M314.2 138.0V141.6" />
<path class="ln" d="M276.8 150H297.8V156.400H276.8Z" />
<circle class="ln" cx="287.2" cy="152.6" r="2.4" />
<path class="ln" d="M278.400 150V156.400M296.200 150V156.400" />
<path class="ln" d="M285.500 156.400V173.400a1.700 1.700 0 0 0 3.400 0V156.400" />
<text x="378.7" y="94.2" font-size="4.7" fill="#222222" font-weight="normal" font-style="normal" textLength="39.1" lengthAdjust="spacingAndGlyphs" stroke="#222" stroke-width=".05">Grohe Atrio – (32129001)</text>
<path class="ln" d="M378.2 126V101.800a1.400 1.400 0 0 1 2.800 0V126" />
<rect class="ln" x="376.8" y="126.0" width="6.4" height="11.5" rx="0" />
<path class="ln" d="M375 137.500H385V139H375Z" />
<path class="ln" d="M383.200 128.400h2.400M385.600 119.300V130.700h1.400V119.300Z" />
<path class="ln" d="M380.0 138.0V141.4" />
<rect class="ln" x="402.0" y="125.0" width="5.0" height="12.5" rx="0" />
<path class="ln" d="M400.600 137.500H408.400V139H400.600Z" />
<path class="ln" d="M402.600 125V108a7.600 7.600 0 0 1 7.600-7.600H425.400V104.500H411.400a5.800 5.800 0 0 0-5.800 5.800V125" />
<path class="ln" d="M420 100.400V104.500" />
<path class="ln" d="M402 132.400h-1.400v2h1.400" />
<path class="ln" d="M404.5 138.0V141.4" />
<circle class="ln" cx="379.0" cy="152.3" r="3" />
<circle class="ln" cx="379.0" cy="152.3" r="1.5" />
<path class="ln" d="M376.400 150.200l5.200 4.200M376.400 154.400l5.200-4.200" />
<rect class="ln" x="382.0" y="151.0" width="7.0" height="6.0" rx="0" />
<path class="ln" d="M384.200 151V157" />
<path class="ln" d="M377.500 155V173.600a1.700 1.700 0 0 0 3.500 0V155" />
<path class="ln" d="M377.500 164h3.500" />
<text x="489.4" y="94.1" font-size="4.7" fill="#222222" font-weight="normal" font-style="normal" textLength="75.8" lengthAdjust="spacingAndGlyphs" stroke="#222" stroke-width=".05">Grohe Eurodisc Joy – DN 15 XL-Size (23428000)</text>
<rect class="ln" x="490.5" y="111.3" width="8.5" height="34.2" rx="0" />
<path class="ln" d="M494.700 103.400V111.300" style="stroke-width:1.3"/>
<path class="ln" d="M492 114.600a2.800 1.600 0 0 0 5.600 0" />
<path class="ln" d="M489.400 145.500H500.200" />
<path class="ln" d="M494.7 144.0V148.4" />
<path class="ln" d="M505.800 145.500V111.300H512L533.800 112.500V114.600L518 117.400L512 117.400V145.500" />
<path class="ln" d="M510.800 111.300L509.400 103.400" style="stroke-width:1.3"/>
<path class="ln" d="M512 114.200L530 113.400" />
<path class="ln" d="M504.600 145.500H513.400" />
<path class="ln" d="M509.0 144.0V148.4" />
<path class="ln" d="M491 156.400a4 5.200 0 0 1 8 0V172a4 4.300 0 0 1-8 0Z" />
<path class="ln" d="M492.600 157a2.400 3.400 0 0 1 4.800 0V171.600a2.400 2.800 0 0 1-4.800 0Z" />
<circle class="ln" cx="495.0" cy="155.4" r="2.2" fill="#6a6a6a"/>
<text x="600.5" y="94.1" font-size="4.7" fill="#222222" font-weight="normal" font-style="normal" textLength="46.7" lengthAdjust="spacingAndGlyphs" stroke="#222" stroke-width=".05">Grohe Grandera - (23310000)</text>
<path class="ln" d="M601 120.400V101.600a1.600 1.600 0 0 1 1.600-1.600h2.700a1.600 1.600 0 0 1 1.600 1.600V120.400Z" />
<rect class="ln" x="602.2" y="103.4" width="3.5" height="5.2" rx="0.8" />
<path class="ln" d="M601 111.400h5.900" />
<path class="ln" d="M599.800 120.400H608.100" />
<path class="ln" d="M603.9 119.0V124.0" />
<path class="ln" d="M616.400 120.400V103H623.300V120.400" />
<path class="ln" d="M616.400 100H630V102.400H616.400Z" />
<path class="ln" d="M623.300 105.600H630a4.700 4.700 0 0 1 4.700 4.700V112.500H632V110.800a2 2 0 0 0-2-2H623.300" />
<path class="ln" d="M615 120.400H624.700" />
<path class="ln" d="M619.8 119.0V124.0" />
<circle class="ln" cx="604.0" cy="148.2" r="3.4" />
<circle class="ln" cx="604.0" cy="148.2" r="2" fill="#6a6a6a"/>
<path class="ln" d="M602 151V161.600a2 2 0 0 0 4 0V151" />
<path class="ln" d="M603.300 153v8M604.700 153v8" />
<text x="63.0" y="223.4" font-size="4.7" fill="#222222" font-weight="normal" font-style="normal" textLength="69.4" lengthAdjust="spacingAndGlyphs" stroke="#222" stroke-width=".05">Grohe Eurosmart Cosmopolitan -(20187000)</text>
<path class="ln" d="M66.500 234.600H77.300V235.800H66.500Z" />
<path class="ln" d="M72.800 235.800V240.300H77.800V235.800" />
<path class="ln" d="M71 240.300H79.400" />
<rect class="ln" x="85.0" y="227.6" width="6.4" height="12.7" rx="0" />
<rect class="ln" x="85.0" y="227.6" width="6.4" height="2.6" rx="0" fill="#6a6a6a"/>
<rect class="ln" x="86.4" y="230.2" width="3.6" height="3.2" rx="0" />
<path class="ln" d="M83.600 240.300H92.800" />
<path class="ln" d="M97.700 234.600H108.900V235.800H97.700Z" />
<path class="ln" d="M97.800 235.800V240.300H102.800V235.800" />
<path class="ln" d="M96.400 240.300H104.400" />
<path class="ln" d="M118 240.300V231.600q.4-4 4.600-4H134.700V230.400H126q-1.600 0-1.600 1.800V240.300" />
<path class="ln" d="M118 236H124.400" />
<path class="ln" d="M116.400 240.300H126.400V238.600H116.400Z" />
<path class="ln" d="M124 228.600H134.700" />
<path class="ln" d="M67 256.700a3.600 3.600 0 0 1 3.600-3.600H75.400a3.600 3.600 0 0 1 0 7.200H70.600a3.600 3.600 0 0 1-3.600-3.600Z" />
<circle class="ln" cx="75.4" cy="256.7" r="2.4" />
<path class="ln" d="M84.500 257a3.600 4.400 0 0 1 7.200 0V266.200a3.600 3.600 0 0 1-7.200 0Z" />
<path class="ln" d="M85.800 255.400a2.400 2.400 0 0 1 4.600 0" />
<path class="ln" d="M88.1 250.6V253.6" />
<path class="ln" d="M109 256.700a3.600 3.600 0 0 0-3.600-3.600H100.400a3.600 3.600 0 0 0 0 7.200H105.400a3.600 3.600 0 0 0 3.600-3.600Z" />
<circle class="ln" cx="100.4" cy="256.7" r="2.4" />
<text x="175.3" y="223.7" font-size="4.7" fill="#222222" font-weight="normal" font-style="normal" textLength="62.1" lengthAdjust="spacingAndGlyphs" stroke="#222" stroke-width=".05">Grohe AG Grohe Eurosmart-(23537002)</text>
<path class="ln" d="M182.800 255V230.400a1.600 1.600 0 0 1 3.200 0V255" />
<path class="ln" d="M182.800 236h3.200M182.800 239.600h3.200" />
<rect class="ln" x="180.5" y="255.0" width="6.1" height="10.3" rx="0" />
<path class="ln" d="M186.600 258h4.400q1.600 0 2-1.600l1.600-6h-2l-1.600 4.400h-4.400" />
<path class="ln" d="M179 265.300H188" />
<path class="ln" d="M183.6 264.0V268.4" />
<path class="ln" d="M213.300 265.300V240a10 11.200 0 0 1 20 0V241.600" />
<path class="ln" d="M216.300 265.300V240a7 8.400 0 0 1 14 0V241.600" />
<path class="ln" d="M230 241.600h3.600v1.400h-3.600z" />
<path class="ln" d="M216.300 256l3-5.600a1.300 1.300 0 0 1 2 1.400l-3.600 5.600" />
<path class="ln" d="M213.300 258.400h-1.600v2h1.600" />
<path class="ln" d="M211.800 265.300H217.800" />
<path class="ln" d="M214.8 264.0V268.4" />
<circle class="ln" cx="183.8" cy="284.4" r="3" />
<path class="ln" d="M186.600 281.400H193.400q1.600 0 1.600 1.600V288h-2.400v-2.400H186.600" />
<path class="ln" d="M182.400 287V303.400a2 2 0 0 0 4 0V287" />
<text x="295.0" y="223.5" font-size="4.7" fill="#222222" font-weight="normal" font-style="normal" textLength="52.0" lengthAdjust="spacingAndGlyphs" stroke="#222" stroke-width=".05">Essence New  DN 15 (23462001)</text>
<path class="ln" d="M297.800 245V236.600a1.350 1.350 0 0 1 2.700 0V245" />
<path class="ln" d="M297.800 238.400h2.700M297.800 240h2.700" style="stroke-width:.8"/>
<path class="ln" d="M296.300 257.400V247.600L297.800 245H300.500L302.300 247.600V257.400Z" />
<path class="ln" d="M302.300 250.400H307.400M307.400 242.300V251.400" />
<path class="ln" d="M295 257.400H303.600" />
<path class="ln" d="M299.2 256.0V260.4" />
<rect class="ln" x="317.8" y="247.7" width="5.5" height="9.7" rx="0" />
<path class="ln" d="M317.800 247.700Q318 235 326 234H333.600Q336 234 336 236.400V238.600H333.600V237.400Q333.600 236.600 332.600 236.600H327Q323.300 237 323.300 247.700" />
<path class="ln" d="M323.300 249L326.600 241.400" />
<path class="ln" d="M317.800 252.400h-2v1.600h2" />
<path class="ln" d="M316.400 257.400H324.800" />
<path class="ln" d="M320.6 256.0V260.4" />
<path class="ln" d="M296.300 267H308.700V270.400H306.600V272H301.500" />
<circle class="ln" cx="299.4" cy="269.4" r="2.4" />
<path class="ln" d="M297.500 271V285.400a2 2 0 0 0 4 0V271" />
<path class="ln" d="M308.700 267V274" />
<text x="396.4" y="223.5" font-size="4.7" fill="#222222" font-weight="normal" font-style="normal" textLength="44.6" lengthAdjust="spacingAndGlyphs" stroke="#222" stroke-width=".05">Grohe Quadra -  (32631000)</text>
<rect class="ln" x="391.3" y="232.2" width="6.0" height="19.2" rx="0" />
<rect class="ln" x="391.3" y="232.2" width="6.0" height="2.4" rx="0" fill="#6a6a6a"/>
<rect class="ln" x="392.6" y="238.6" width="3.4" height="5.0" rx="0" />
<path class="ln" d="M392.600 241h3.400" />
<path class="ln" d="M390 251.400H398.600" />
<path class="ln" d="M394.3 250.0V255.0" />
<rect class="ln" x="408.3" y="234.6" width="5.4" height="16.8" rx="0" />
<path class="ln" d="M408 232.200H422.800V234.200H408Z" />
<path class="ln" d="M413.700 240H427.800V243.200H413.700" />
<path class="ln" d="M408.300 244.400h-2.400M405.900 243.400v2" />
<path class="ln" d="M407 251.400H415" />
<path class="ln" d="M411.0 250.0V255.0" />
<path class="ln" d="M391.300 265V280.500H397.900V265" />
<path class="ln" d="M391.300 265L394.600 261L397.900 265" />
<rect class="ln" x="392.8" y="265.6" width="3.6" height="9.0" rx="0.8" />
<path class="ln" d="M392.800 277h3.600" />
<path class="ln" d="M394.6 258.4V262.0" />
<text x="490.7" y="223.5" font-size="4.7" fill="#222222" font-weight="normal" font-style="normal" textLength="67.3" lengthAdjust="spacingAndGlyphs" stroke="#222" stroke-width=".05">Grohe Eurostyle Cosmopolitan (33552002)</text>
<rect class="ln" x="492.7" y="237.6" width="6.8" height="18.4" rx="0.8" />
<path class="ln" d="M494 241a2.200 3 0 0 0 4.400 0" />
<circle class="ln" cx="496.2" cy="243.6" r="1.3" fill="#6a6a6a"/>
<path class="ln" d="M491.400 256H500.800" />
<path class="ln" d="M496.1 254.6V260.0" />
<path class="ln" d="M509 256V239.600H516V256" />
<path class="ln" d="M509 239.600Q509 237 512 237H526V238.600L516 241.400" />
<path class="ln" d="M516 242.700H529.200Q528 246.800 522 246.800H516" />
<path class="ln" d="M509 249h-1.600v-1.600" />
<path class="ln" d="M507.600 256H517.400" />
<path class="ln" d="M512.5 254.6V260.0" />
<path class="ln" d="M493.300 284.600a3.100 3.600 0 0 1 6.200 0V295a3.100 3.500 0 0 1-6.200 0Z" />
<circle class="ln" cx="496.4" cy="284.0" r="2.2" />
<path class="ln" d="M496.4 279.4V282.0" />
<text x="596.0" y="223.5" font-size="4.7" fill="#222222" font-weight="normal" font-style="normal" textLength="45.5" lengthAdjust="spacingAndGlyphs" stroke="#222" stroke-width=".05">Grohe Eurocube  (23135000)</text>
<rect class="ln" x="597.4" y="234.5" width="4.1" height="18.5" rx="0" />
<rect class="ln" x="597.4" y="234.5" width="4.1" height="1.9" rx="0" fill="#6a6a6a"/>
<rect class="ln" x="596.0" y="253.0" width="7.6" height="11.3" rx="0" />
<path class="ln" d="M603.600 256.400h3.600v-5.400h2.500v11.200h-2.500v-3.400h-3.600" />
<path class="ln" d="M594.600 264.300H605" />
<path class="ln" d="M599.5 263.0V268.0" />
<rect class="ln" x="621.0" y="253.0" width="5.2" height="11.3" rx="0" />
<path class="ln" d="M621 253L623 239.600Q623.600 236.400 627 236L643 234.500Q644.600 234.500 644.600 236V237.600H642.600L627.600 239Q626 239.400 625.800 241L626.200 253" />
<path class="ln" d="M626.200 256L630.600 250.600L632 251.600L627.600 258" />
<path class="ln" d="M621 258.400h-3.600l-.8 1.400h4.400" />
<path class="ln" d="M619.600 264.300H627.600" />
<path class="ln" d="M623.6 263.0V268.0" />
<path class="ln" d="M596.800 273.500H603.600V283.700H596.800Z" />
<path class="ln" d="M603.600 276.400H607.200V273.500H609.700V283.700H607.200V280.400H603.600" />
<path class="ln" d="M597.400 283.700V300H601.500V283.700" />
<path class="ln" d="M599.4 271.4V274.6" />
<text x="72.4" y="331.3" font-size="4.7" fill="#222222" font-weight="normal" font-style="normal" textLength="52.6" lengthAdjust="spacingAndGlyphs" stroke="#222" stroke-width=".05">Grohe Allure Brilliant - (23033000)</text>
<path class="ln" d="M89.600 336H93V342.600L94.300 345.600V357.500H88.400V345.600L89.600 342.600Z" />
<path class="ln" d="M89.600 338.400H93" />
<path class="ln" d="M88.800 344.400h5" style="stroke-width:1"/>
<path class="ln" d="M87.200 357.500H95.600" />
<path class="ln" d="M91.4 356.0V360.4" />
<path class="ln" d="M101.100 357.500V338.300H107V357.500" />
<path class="ln" d="M101.100 338.300L118.200 336V337.400L107 340.600" />
<path class="ln" d="M107 341.600H121.900V343.600H107" />
<path class="ln" d="M99.800 357.500H108.400" />
<path class="ln" d="M104.0 356.0V360.4" />
<rect class="ln" x="88.7" y="368.6" width="5.6" height="9.4" rx="0" />
<rect class="ln" x="90.0" y="369.6" width="3.0" height="4.4" rx="0" />
<text x="175.4" y="331.3" font-size="4.7" fill="#222222" font-weight="normal" font-style="normal" textLength="51.5" lengthAdjust="spacingAndGlyphs" stroke="#222" stroke-width=".05">Grohe Essence New (19408001)</text>
<circle class="ln" cx="183.3" cy="341.2" r="4.2" />
<circle class="ln" cx="183.3" cy="341.2" r="2.3" />
<circle class="ln" cx="183.3" cy="341.2" r="1.7" fill="#6a6a6a"/>
<circle class="ln" cx="196.9" cy="341.2" r="4.2" />
<circle class="ln" cx="196.9" cy="341.2" r="2.3" />
<circle class="ln" cx="196.9" cy="341.2" r="1.7" fill="#6a6a6a"/>
<path class="ln" d="M187.500 341.200H192.700" />
<path class="ln" d="M196.300 345.400V352M197.500 345.400V352M196.300 352h1.200" />
<path class="ln" d="M207.700 337.500V344.700M206 341h1.700" />
<rect class="ln" x="209.0" y="338.4" width="5.5" height="5.4" rx="0" />
<path class="ln" d="M214.500 340H228.600Q231.200 340 231.200 342.600V345H229.200V343.600Q229.200 342.800 228.200 342.800H214.500" />
<path class="ln" d="M214.800 343.800V352M216 343.800V352M214.800 352h1.200" />
<path class="ln" d="M178.600 359H188.100M180 360.400H186.700" />
<path class="ln" d="M181.500 360.400V382a2 2 0 0 0 4 0V360.400" />
<path class="ln" d="M181.500 377h4" />
<path class="ln" d="M183.3 356.8V359.0" />
<path class="ln" d="M193.400 358.300H200.900M194.400 359.800H199.900" />
<path class="ln" d="M194.400 359.800V365.400q0 1.600 1.600 1.600h2.400q1.600 0 1.600-1.600V359.800" />
<path class="ln" d="M194.400 363h5.600" />
<path class="ln" d="M197.1 356.4V358.3" />
<text x="290.0" y="330.8" font-size="4.7" fill="#222222" font-weight="normal" font-style="normal" textLength="58.4" lengthAdjust="spacingAndGlyphs" stroke="#222" stroke-width=".05">Grohe Eurosmart - DN 15 -32926002</text>
<rect class="ln" x="291.8" y="335.5" width="6.4" height="15.5" rx="1.2" />
<path class="ln" d="M293 339.600a2.200 2.400 0 0 0 4.200 0" />
<circle class="ln" cx="295.0" cy="342.0" r="1.4" fill="#6a6a6a"/>
<path class="ln" d="M290.600 351H299.400" />
<path class="ln" d="M295.0 349.6V354.4" />
<path class="ln" d="M312.800 351V341.900H319.200V351" />
<path class="ln" d="M312.800 341.900Q313.600 338 318 337L329 335.600Q330.400 335.600 330 337L319.200 340.400" />
<path class="ln" d="M319.200 341.900H329.200Q329 345 324 345.400H319.200" />
<path class="ln" d="M312.800 345h-1.800v-1.600" />
<path class="ln" d="M311.400 351H320.600" />
<path class="ln" d="M316.0 349.6V354.4" />
<path class="ln" d="M291.300 371a3.650 5.800 0 0 1 7.300 0Q298.600 376 297.400 380Q297 383.800 295 383.800Q293 383.800 292.600 380Q291.300 376 291.300 371Z" />
<path class="ln" d="M292.800 369.400Q295 366.400 297.200 369.400" />
<text x="386.0" y="330.7" font-size="4.7" fill="#222222" font-weight="normal" font-style="normal" textLength="69.2" lengthAdjust="spacingAndGlyphs" stroke="#222" stroke-width=".05">Grohe Eurostyle Cosmopolitan - (23037002)</text>
<rect class="ln" x="388.1" y="335.5" width="5.5" height="18.2" rx="1" />
<path class="ln" d="M389.200 338.600a1.800 2 0 0 0 3.400 0" />
<circle class="ln" cx="390.9" cy="340.6" r="1.2" fill="#6a6a6a"/>
<path class="ln" d="M387 353.700H394.800" />
<path class="ln" d="M390.9 352.4V357.4" />
<path class="ln" d="M404.200 353.700V339H410.500V353.700" />
<path class="ln" d="M404.200 339Q404.400 335.500 408 335.500H417V337L410.500 339.600" />
<path class="ln" d="M410.500 341H422.800Q421.600 343.700 416 343.700H410.500" />
<path class="ln" d="M404.200 346.400h-1.600v-1.400" />
<path class="ln" d="M403 353.700H411.800" />
<path class="ln" d="M407.3 352.4V357.4" />
<path class="ln" d="M386.800 380a3.600 3.800 0 0 1 7.200 0V391a3.600 3.700 0 0 1-7.200 0Z" />
<circle class="ln" cx="390.4" cy="379.4" r="2.3" />
<path class="ln" d="M390.4 374.4V377.4" />
<text x="492.3" y="330.9" font-size="4.7" fill="#222222" font-weight="normal" font-style="normal" textLength="39.0" lengthAdjust="spacingAndGlyphs" stroke="#222" stroke-width=".05">Grohe Atrio - (21019000)</text>
<path class="ln" d="M502 359V337a1.500 1.500 0 0 1 3 0V359" />
<path class="ln" d="M502 343.600h3M502 345h3" style="stroke-width:.7"/>
<path class="ln" d="M495.500 360H511V365H495.500Z" />
<rect class="ln" x="492.7" y="358.0" width="2.8" height="9.0" rx="0" />
<rect class="ln" x="511.0" y="358.0" width="2.8" height="9.0" rx="0" />
<path class="ln" d="M491.400 360h1.300M491.400 365h1.300M513.800 360h1.300M513.800 365h1.300" />
<path class="ln" d="M500 359h7v1h-7z" />
<path class="ln" d="M500 365V370.200H507V365" />
<path class="ln" d="M498.600 370.200H508.400" />
<path class="ln" d="M503.5 369.0V373.4" />
<path class="ln" d="M529.800 369V344a10.450 9.600 0 0 1 20.900 0V346.600" />
<path class="ln" d="M532.300 369V344a7.950 7.200 0 0 1 15.900 0V346.600" />
<path class="ln" d="M547.800 346.600h3.300v1.400h-3.300z" />
<path class="ln" d="M528.600 358h5v11h-5z" />
<path class="ln" d="M533.600 361.400L538.400 364.400M533.600 363.400L538.400 360.800" />
<path class="ln" d="M528 369H534.400" />
<path class="ln" d="M531.0 368.0V372.4" />
<path class="ln" d="M495.500 386.600H511V391.700H495.500Z" />
<rect class="ln" x="492.7" y="384.6" width="2.8" height="9.1" rx="0" />
<rect class="ln" x="511.0" y="384.6" width="2.8" height="9.1" rx="0" />
<circle class="ln" cx="503.5" cy="387.0" r="3" />
<circle class="ln" cx="503.5" cy="387.0" r="1.5" fill="#6a6a6a"/>
<path class="ln" d="M502 390V405M505 390V405" />
<text x="586.3" y="330.9" font-size="4.7" fill="#222222" font-weight="normal" font-style="normal" textLength="40.0" lengthAdjust="spacingAndGlyphs" stroke="#222" stroke-width=".05">Grohe Atrio - (20387000)</text>
<circle class="ln" cx="587.3" cy="339.5" r="2.6" fill="#8a8a8a"/>
<circle class="ln" cx="587.3" cy="339.5" r="1.2" fill="#6a6a6a"/>
<path class="ln" d="M587.3 339.500V335.400M587.3 339.500L583.6999999999999 341.800M587.3 339.500L590.9 341.800" style="stroke-width:1.100"/>
<circle class="ln" cx="612.3" cy="339.5" r="2.6" fill="#8a8a8a"/>
<circle class="ln" cx="612.3" cy="339.5" r="1.2" fill="#6a6a6a"/>
<path class="ln" d="M612.3 339.500V335.400M612.3 339.500L608.6999999999999 341.800M612.3 339.500L615.9 341.800" style="stroke-width:1.100"/>
<circle class="ln" cx="600.0" cy="339.5" r="2.8" />
<circle class="ln" cx="600.0" cy="339.5" r="1.5" fill="#6a6a6a"/>
<path class="ln" d="M598.800 342.300V344.400H601.200V342.300" />
<path class="ln" d="M624.200 336V343M622.400 339.500H624.200" />
<rect class="ln" x="625.4" y="337.4" width="5.6" height="4.2" rx="0" />
<path class="ln" d="M631 336.400V342.600M632.200 336.400V342.600" />
<path class="ln" d="M632.200 338.400H648Q653 338.400 653 343V345.600H651V343.400Q651 340.600 648 340.600H632.200" />
<path class="ln" d="M583.6999999999999 366H590.9" />
<rect class="ln" x="585.1" y="366.0" width="4.4" height="6.4" rx="0" />
<path class="ln" d="M584.0999999999999 372.400H590.5V374H584.0999999999999Z" />
<path class="ln" d="M585.6999999999999 374V376.400H588.9V374" />
<path class="ln" d="M587.3 363.6V366.0" />
<path class="ln" d="M608.6999999999999 366H615.9" />
<rect class="ln" x="610.1" y="366.0" width="4.4" height="6.4" rx="0" />
<path class="ln" d="M609.0999999999999 372.400H615.5V374H609.0999999999999Z" />
<path class="ln" d="M610.6999999999999 374V376.400H613.9V374" />
<path class="ln" d="M612.3 363.6V366.0" />
<path class="ln" d="M596.400 366H603.600" />
<rect class="ln" x="597.8" y="366.0" width="4.4" height="5.4" rx="0" />
<path class="ln" d="M600.0 363.6V366.0" />
<path class="ln" d="M598.600 371.400V394a1.400 1.400 0 0 0 2.800 0V371.400" />
<path d="M725.900 402.600V409.600" stroke="#59c8d8" stroke-width=".6"/><path d="M726.800 402.600V409.600" stroke="#3a3f4a" stroke-width=".6"/>
</g>
<g id="mascot">
<path d="M713 131L706 141L703.600 147.400L709.600 150L713.600 143.400L720.600 139.600L726.600 142.600L731 149.600L736.400 147.400L733.600 140L729 131Z" fill="#2d86d3" stroke="#174a86" stroke-width=".6"/>
<path d="M703.600 147.400L700.800 152.400Q704 154.600 708.400 152.400L709.600 150Z" fill="#2d86d3" stroke="#174a86" stroke-width=".6"/>
<path d="M731 149.600L733.400 155.400Q737 156.400 739 153.600L736.400 147.400Z" fill="#2d86d3" stroke="#174a86" stroke-width=".6"/>
<path d="M703.600 147.400l6 2.600M731 149.600l5.400-2.200" stroke="#3b3b3b" stroke-width="1.300"/>
<path d="M715 114.600L709 117.600L711.600 132L714 137.600L728.600 137L730.400 130L731.600 116.600L726 113.600Z" fill="#2f8fdc" stroke="#174a86" stroke-width=".6"/>
<path d="M720.600 117V136.600" stroke="#174a86" stroke-width=".6"/><path d="M722.600 117.600V136.600" stroke="#4a4a4a" stroke-width=".9"/>
<path d="M687.4 132.800L754.600 107.400" stroke="#6b3a17" stroke-width="3" stroke-linecap="round"/>
<path d="M687.400 132.800L754.600 107.400" stroke="#a8642e" stroke-width="1.800" stroke-linecap="round"/>
<path d="M711 117.600L704 124.600L703 128.400L707.600 129.600L714 122.600Z" fill="#2f8fdc" stroke="#174a86" stroke-width=".6"/>
<circle cx="703.600" cy="127.600" r="2.300" fill="#f2b07a" stroke="#8a4a22" stroke-width=".4"/>
<path d="M730 116.600L737.600 121.600L741.600 116L739 113.600L735.600 116.600L731.600 114Z" fill="#2f8fdc" stroke="#174a86" stroke-width=".6"/>
<circle cx="740.400" cy="113.600" r="2.400" fill="#f2b07a" stroke="#8a4a22" stroke-width=".4"/>
<path d="M708.200 98Q706.600 109 712.600 114Q720 119.600 729.600 115Q737.600 110.600 738.600 98Z" fill="#f4b784" stroke="#8a4a22" stroke-width=".5"/>
<ellipse cx="740" cy="103.600" rx="1.800" ry="2.600" fill="#f4b784" stroke="#8a4a22" stroke-width=".4"/>
<ellipse cx="715" cy="101.400" rx="2.600" ry="1.800" fill="#ffffff"/><ellipse cx="727.600" cy="101.400" rx="2.800" ry="1.900" fill="#ffffff"/>
<circle cx="716" cy="101.600" r="1.200" fill="#3a5f8a"/><circle cx="726.600" cy="101.600" r="1.200" fill="#3a5f8a"/>
<path d="M711.600 99.400L718 100.600M731.600 99.400L724.600 100.600" stroke="#5a2f12" stroke-width=".9"/>
<path d="M716 109.600Q721 112.800 727.600 108" stroke="#7a3a1a" stroke-width=".7" fill="none"/>
<path d="M720.600 104.600q.8 1.200 2 .4" stroke="#a8623a" stroke-width=".5" fill="none"/>
<path d="M708.200 93Q707 86 711.600 82.600L710.600 80L715 80.600L716 76.600L720 79.600L724.600 75.600L727 79.400L732.600 77.600L733.400 82L738 82.600L737 87Q740.600 90 739.400 93.600Z" fill="#f6b21a" stroke="#b56a0c" stroke-width=".5"/>
<path d="M713 90Q714 84 718 81.600Q716.600 86 718.600 90ZM722 90Q722 83 726 80Q725.600 86 728.600 90Z" fill="#fbe060"/>
<path d="M737.600 99.400L740 104L738.600 108" stroke="#f6b21a" stroke-width="1.200" fill="none"/>
<path d="M706.400 92Q722 88.600 739.200 91.400L739.400 99.200Q722 101.600 707.200 99.400Z" fill="#3b3d42" stroke="#1f2024" stroke-width=".4"/>
<path d="M739.200 93.600Q744 89.600 748.600 91.400Q746 92.600 746.600 96Q748.600 99 746 102Q745.600 97.600 739.400 97.600Z" fill="#2e3035"/>
<path d="M750.600 104.600Q750 98.600 754.600 96.400Q759 96 763.600 100.400Q765.600 104 763 107.600Q761.600 111 761.400 115.600Q760.600 119.600 759.400 116Q759 110 756.600 108.600Q751.600 108.600 750.600 104.600Z" fill="#f4b62c" stroke="#c5821a" stroke-width=".5"/>
<path d="M754 99.400Q758 99 761 102.400Q760 105.600 757 105.600Q753.600 103.600 754 99.400Z" fill="#fbd75c"/>
<text x="666.8" y="167.8" font-size="21.5" textLength="16.4" lengthAdjust="spacingAndGlyphs" transform="rotate(-6 674 160)" fill="url(#gTxt)" stroke="#2a8bd6" stroke-width=".35" >P</text>
<text x="681.6" y="174.600" font-size="15.500" textLength="34.5" lengthAdjust="spacingAndGlyphs" transform="rotate(8 700 173)" fill="url(#gTxt)" stroke="#2a8bd6" stroke-width=".35" >islik</text>
<text x="718.6" y="173.4" font-size="17.5" textLength="58" lengthAdjust="spacingAndGlyphs" transform="rotate(-9 749 170)" fill="url(#gTxt)" stroke="#2a8bd6" stroke-width=".35" >Mimar</text>
<circle cx="769" cy="179.600" r=".500" fill="#9a9a9a"/>
</g>
<g id="dwg">
<path d="M30.600 314.800H55.700L67.600 328.800V361.400H30.600Z" fill="url(#gBlue)"/>
<path d="M30.600 339.400L67.600 348.200V361.400H30.600Z" fill="url(#gYel)"/>
<path d="M55.700 314.800Q57.600 322 55.400 327.600Q61 326.400 67.600 328.800Z" fill="#12315c"/>
<path d="M55.700 314.800L67.600 328.800Q62 326.800 57.600 327.400Q58.600 321 55.700 314.800Z" fill="#16396a"/>
<path d="M41.300 314.800V341.800M30.600 330H67.600" stroke="#b7cde6" stroke-width=".8" fill="none"/>
<rect x="37.300" y="325.700" width="8.400" height="8.700" fill="#23528e" stroke="#b7cde6" stroke-width=".9"/>
<rect x="40.900" y="329.600" width=".9" height=".9" fill="#e6eef8"/>
<text x="40.400" y="358.300" font-size="10.400" font-weight="bold" fill="#0d0d0d" textLength="26.200" lengthAdjust="spacingAndGlyphs">.dwg</text>
</g>
<g id="download">
<rect x="1" y="370.100" width="94" height="34" rx="17" fill="#7e0f15"/>
<rect x="1" y="370.700" width="93.200" height="33.400" rx="16.700" fill="url(#gBtn)"/>
<text x="8.300" y="393.100" font-size="12.600" font-weight="bold" fill="#ffffff" textLength="55.400" lengthAdjust="spacingAndGlyphs">DOWNLOAD</text>
<circle cx="78.200" cy="387.800" r="10.900" fill="url(#gCirc)"/>
<path d="M75.200 381H81.200V388H84.400L78.200 395.300L72 388H75.200Z" fill="#ffffff"/>
</g>
<g id="statusbar">
<path d="M6.700 413.700h5.800M6.700 415.800h5.800M6.700 417.900h5.800" stroke="#e6e9ef" stroke-width=".8"/>
<path d="M18.8 420.600l2.400-9.400" stroke="#3f4756" stroke-width=".5"/>
<path d="M85.5 420.600l2.400-9.400" stroke="#3f4756" stroke-width=".5"/>
<text x="23.8" y="418.3" font-size="5.8" fill="#d5dae3" font-weight="normal" font-style="normal" textLength="13.2" lengthAdjust="spacingAndGlyphs"  stroke="#d5dae3" stroke-width=".14">Model</text>
<path d="M40 421.800l3.400-12.200h28.800l-3.400 12.200z" fill="#3a4352"/>
<text x="47.2" y="418.3" font-size="5.8" fill="#ffffff" font-weight="bold" font-style="normal" textLength="17.0" lengthAdjust="spacingAndGlyphs"  stroke="#ffffff" stroke-width=".14">Layout1</text>
<path d="M75.600 416h5.400M78.300 413.300v5.400" stroke="#e6e9ef" stroke-width=".8"/>
<rect x="592.500" y="412.200" width="16.700" height="8.800" fill="#343c4a"/>
<text x="594.2" y="418.5" font-size="5.4" fill="#e6e9ef" font-weight="bold" font-style="normal" textLength="13.3" lengthAdjust="spacingAndGlyphs"  stroke="#e6e9ef" stroke-width=".14">PAPER</text>
<rect x="610" y="412.400" width="8.7" height="8.600" fill="#4a7fc0"/>
<rect x="653.2" y="412.400" width="8.8" height="8.600" fill="#4a7fc0"/>
<rect x="662.9" y="412.400" width="8.8" height="8.600" fill="#4a7fc0"/>
<path d="M612 414v5.400h5" stroke="#e6e9ef" stroke-width=".7" fill="none"/><path d="M613.600 419.400v-1.200" stroke="#e6e9ef" stroke-width=".7" fill="none"/>
<circle cx="624.200" cy="416.800" r="2.300" stroke="#e6e9ef" stroke-width=".7" fill="none" stroke="#aeb5c1"/><path d="M624.200 416.800h3M624.200 416.800l2-2" stroke="#aeb5c1" stroke-width=".6"/>
<path d="M631.6 416.4h1.8l-0.9 0.9z" fill="#c9ced8"/>
<path d="M640.800 413.600v6.400M639.200 415.600l3.600 3" stroke="#aeb5c1" stroke-width=".6" fill="none"/>
<path d="M647.9 416.4h1.8l-0.9 0.9z" fill="#c9ced8"/>
<path d="M655 419.400h5.400M655 419.400l4.800-4.800" stroke="#e6e9ef" stroke-width=".7" fill="none"/>
<rect x="664.600" y="414.600" width="5" height="4.400" stroke="#e6e9ef" stroke-width=".7" fill="none"/><path d="M664 414h2" stroke="#e6e9ef" stroke-width=".7" fill="none"/>
<path d="M674.4 416.4h1.8l-0.9 0.9z" fill="#c9ced8"/>
<path d="M682 414.400l4.400 4.800M686.400 414.400l-4.400 4.800M681.600 414h1.600M685.200 414h1.600M681.600 419.600h1.600M685.200 419.600h1.600" stroke="#aeb5c1" stroke-width=".6" fill="none"/>
<path d="M692.400 419.600l2-5.400 2 5.400M693 418h2.800" stroke="#e6e9ef" stroke-width=".7" fill="none"/><path d="M696.600 414.200l1.400 1.400" stroke="#e6e9ef" stroke-width=".7" fill="none"/>
<path d="M701.800 419.600l2-5.400 2 5.400M702.400 418h2.800" stroke="#e6e9ef" stroke-width=".7" fill="none"/><path d="M706.400 413.800v2.400" stroke="#e6e9ef" stroke-width=".7" fill="none"/>
<circle cx="714.700" cy="416.800" r="2.200" fill="none" stroke="#e6e9ef" stroke-width="1.300" stroke-dasharray="1.150 .58"/><circle cx="714.700" cy="416.800" r="1.500" fill="none" stroke="#e6e9ef" stroke-width=".8"/>
<path d="M722.1 416.4h1.8l-0.9 0.9z" fill="#c9ced8"/>
<path d="M728.300 416.800h6M731.300 413.800v6" stroke="#e6e9ef" stroke-width=".8"/>
<rect x="739.400" y="414" width="3.600" height="2.800" fill="none" stroke="#aeb5c1" stroke-width=".6"/><circle cx="744.400" cy="415" r="1.100" fill="none" stroke="#aeb5c1" stroke-width=".5"/><path d="M741.200 416.800v2.800M739.800 419.600h3M744.400 416.200v3.400" stroke="#aeb5c1" stroke-width=".5"/>
<rect x="749.400" y="413.600" width="2.400" height="2.400" fill="#e9c84a"/><rect x="752.600" y="416" width="2.400" height="2.400" fill="#5fb4d8"/><rect x="749.600" y="417.400" width="2.400" height="2.400" fill="#58b889"/><path d="M750.600 416v1.400M751.800 414.800h2v1.200" stroke="#aeb5c1" stroke-width=".4" fill="none"/>
<rect x="760.200" y="414.200" width="6.200" height="5" fill="none" stroke="#e6e9ef" stroke-width=".7"/><path d="M762 417.600l1.600-1.600M765 415.600v1.400h-1.400" stroke="#e6e9ef" stroke-width=".5" fill="none"/>
<path d="M771.400 414.600h5.800M771.400 416.800h5.800M771.400 419h5.800" stroke="#e6e9ef" stroke-width=".9"/>
</g>
<g id="taskbar">
<path d="M6.700 428.800l2.600-.4v2.400H6.700zM9.900 428.300l3-.4v2.900h-3zM6.700 431.400h2.600v2.400l-2.600-.4zM9.900 431.400h3v2.900l-3-.4z" fill="#ffffff"/>
<rect x="19.700" y="423" width="116.600" height="16" fill="#f2f2f2"/>
<circle cx="28.800" cy="430" r="1.900" fill="none" stroke="#3a3a3a" stroke-width=".7"/><path d="M27.400 431.500l-2.200 2.300" stroke="#3a3a3a" stroke-width=".8"/>
<text x="35.8" y="433.6" font-size="6.6" fill="#3a3a3a" font-weight="normal" font-style="normal" textLength="9.2" lengthAdjust="spacingAndGlyphs"  stroke="#3a3a3a" stroke-width=".14">Ara</text>
<circle cx="147.500" cy="430.800" r="4.900" fill="#e8453c"/>
<path d="M147.500 430.800L143.260 428.350A4.900 4.900 0 0 0 147.500 435.700Z" fill="#34a853"/><path d="M147.500 430.800V435.700A4.900 4.900 0 0 0 151.740 428.350Z" fill="#fbbc05"/>
<path d="M147.500 430.800L143.260 428.350A4.900 4.900 0 0 0 145.050 435.040Z" fill="#34a853"/>
<circle cx="147.500" cy="430.800" r="2.300" fill="#ffffff"/><circle cx="147.500" cy="430.800" r="1.800" fill="#4285f4"/>
<ellipse cx="167.500" cy="430.800" rx="3.600" ry="4.200" fill="none" stroke="#e0202a" stroke-width="2.600"/>
<rect x="177.400" y="422.300" width="19.200" height="16.700" fill="#3a3a3a"/>
<rect x="182.800" y="426" width="9.600" height="10.300" rx="1" fill="#dc1c52"/><rect x="182.800" y="433" width="9.600" height="3.300" rx=".8" fill="#b01240"/>
<text x="185.4" y="431.6" font-size="5.6" fill="#ffffff" font-weight="bold" font-style="normal" textLength="3.8" lengthAdjust="spacingAndGlyphs"  stroke="#ffffff" stroke-width=".14">A</text>
<rect x="185.600" y="433.400" width="3.400" height=".700" fill="#f3c9d4"/>
<ellipse cx="206.600" cy="431.600" rx="4.600" ry="3.600" fill="#e9e4d2" stroke="#8a8676" stroke-width=".4"/><circle cx="205" cy="431" r="1" fill="#4a8fd8"/><circle cx="208" cy="432.600" r=".9" fill="#58b84a"/><circle cx="204.600" cy="433.400" r=".8" fill="#e8453c"/><path d="M207.600 430.600l4-4.600" stroke="#e9b94a" stroke-width="1"/><circle cx="211.800" cy="425.800" r=".9" fill="#e8733a"/>
<rect x="139.7" y="438" width="15.6" height="1" fill="#76b9ed"/>
<rect x="159" y="438" width="16.8" height="1" fill="#76b9ed"/>
<rect x="177.5" y="438" width="19.2" height="1" fill="#8fc8f4"/>
<rect x="199" y="438" width="16.0" height="1" fill="#76b9ed"/>
<path d="M715 431.800l2-2 2 2" stroke="#e6e9ef" stroke-width=".7" fill="none"/>
<path d="M723.600 429.800h1.400l1.800-1.600v5.400l-1.800-1.600h-1.400z" fill="none" stroke="#e6e9ef" stroke-width=".6"/><path d="M728 429.600q1 1.300 0 2.600" stroke="#e6e9ef" stroke-width=".5" fill="none"/>
<text x="740.0" y="428.7" font-size="5.2" fill="#ffffff" font-weight="normal" font-style="normal" textLength="10.0" lengthAdjust="spacingAndGlyphs"  stroke="#ffffff" stroke-width=".14">19:40</text>
<text x="734.7" y="436.3" font-size="5.2" fill="#ffffff" font-weight="normal" font-style="normal" textLength="21.1" lengthAdjust="spacingAndGlyphs"  stroke="#ffffff" stroke-width=".14">15.04.2026</text>
<path d="M763.600 428.400h5.600v4.200h-2l-1.400 1.400v-1.400h-2.200z" fill="none" stroke="#e6e9ef" stroke-width=".7"/>
<path d="M779.300 422v17" stroke="#5a5f6a" stroke-width=".5"/>
</g>
</svg>
</body>
</html>
